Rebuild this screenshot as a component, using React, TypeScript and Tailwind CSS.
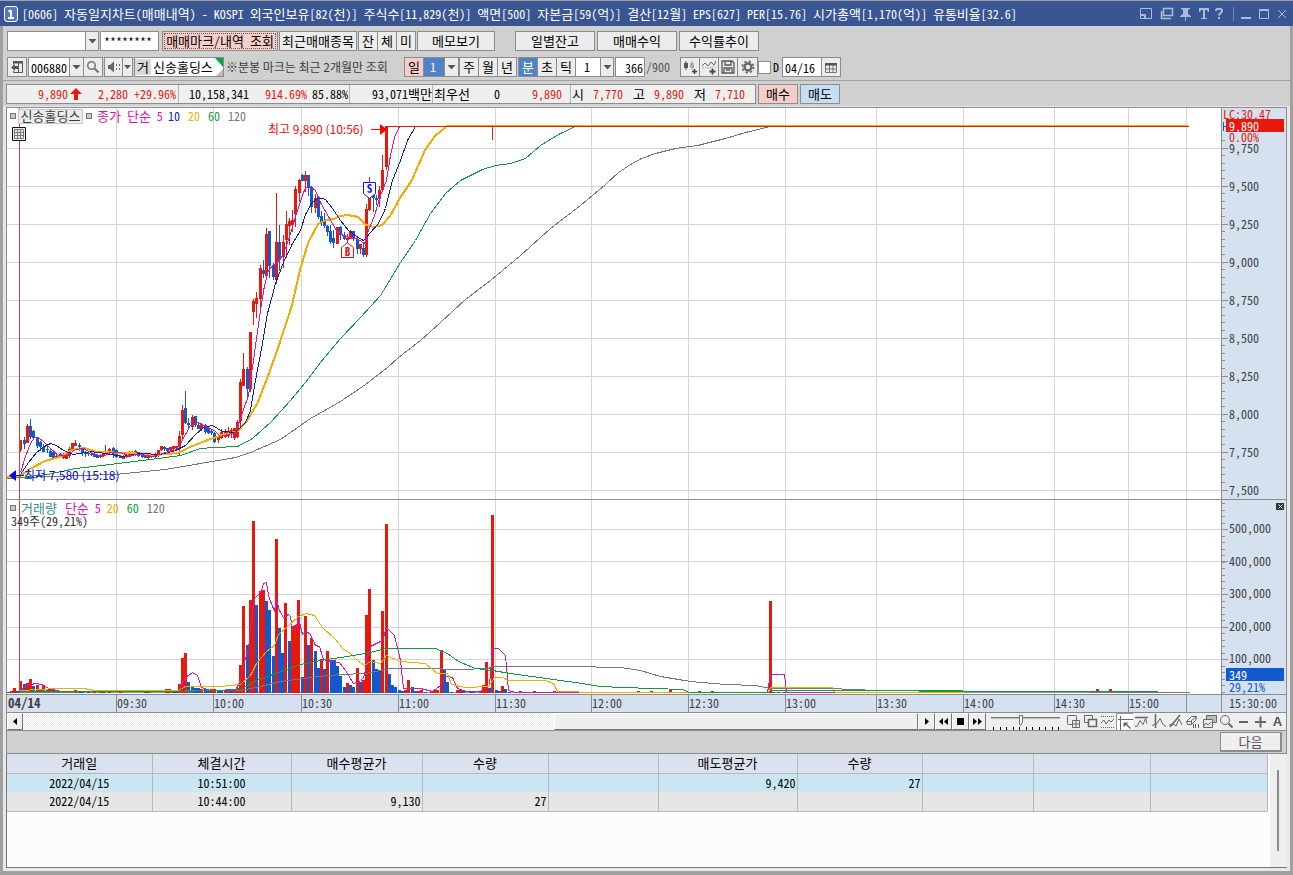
import React from "react";

const FONT =
  "[font-family:'Noto_Sans_Mono_CJK_KR','Noto_Sans_CJK_KR',monospace] text-[12px] leading-[16px]";
const PROPORTIONAL = "[font-family:'Noto_Sans_CJK_KR',sans-serif]";

/* ---------- data ---------- */

const PLOT_LEFT = 7;
const PLOT_WIDTH = 1214;
const pct = (x: number) => `${((x - PLOT_LEFT) / PLOT_WIDTH) * 100}%`;

const RED = "#e8190b";
const BLUE = "#1159cc";

// [x, direction, body top, body bottom, high, low]
type Candle = [number, "r" | "b", number, number, number, number];
const candles: Candle[] = [
  [8, "r", 477, 479, 477, 479], [11, "r", 477, 479, 476, 479], [20, "r", 440, 450, 440, 452], [24, "b", 440, 444, 437, 449],
  [27, "r", 426, 443, 424, 443], [30, "b", 426, 437, 419, 439], [33, "b", 431, 438, 430, 438],
  [37, "b", 437, 446, 437, 448], [40, "b", 442, 447, 441, 451], [43, "b", 447, 452, 444, 452],
  [47, "b", 449, 450, 446, 453], [50, "b", 451, 457, 449, 457], [53, "b", 452, 459, 450, 459],
  [56, "r", 456, 459, 454, 459], [60, "b", 454, 457, 453, 458], [63, "r", 455, 458, 453, 459],
  [66, "r", 455, 459, 454, 459], [69, "r", 449, 456, 447, 458], [72, "r", 443, 450, 443, 452],
  [75, "r", 443, 446, 440, 446], [79, "b", 445, 447, 443, 451], [82, "b", 449, 453, 448, 456],
  [85, "b", 453, 454, 451, 457], [88, "b", 453, 454, 451, 456], [91, "b", 454, 455, 452, 456],
  [94, "b", 454, 457, 453, 457], [97, "b", 455, 458, 454, 458], [100, "r", 455, 457, 454, 458],
  [103, "r", 454, 456, 453, 457], [105, "r", 451, 453, 445, 454], [109, "r", 449, 453, 448, 454],
  [113, "b", 448, 455, 447, 458], [116, "b", 450, 457, 449, 458], [120, "b", 456, 458, 455, 458],
  [123, "r", 457, 459, 455, 459], [126, "r", 455, 457, 454, 458], [129, "r", 452, 457, 451, 457],
  [132, "b", 452, 455, 451, 456], [135, "r", 451, 455, 450, 456], [138, "b", 452, 456, 452, 457],
  [142, "b", 455, 457, 453, 458], [145, "b", 456, 458, 455, 458], [148, "r", 456, 458, 455, 459],
  [151, "b", 455, 457, 455, 458], [155, "r", 454, 457, 453, 458], [158, "r", 450, 456, 450, 457],
  [161, "r", 446, 450, 446, 451], [164, "b", 447, 449, 446, 451], [167, "b", 448, 451, 448, 452],
  [170, "r", 447, 450, 447, 451], [173, "r", 446, 449, 446, 450], [176, "r", 446, 448, 446, 449],
  [179, "r", 436, 447, 431, 455], [182, "r", 410, 435, 405, 439], [185, "b", 408, 423, 391, 424],
  [188, "b", 423, 425, 418, 429], [192, "r", 417, 427, 415, 430], [195, "b", 416, 425, 416, 427],
  [198, "b", 425, 429, 422, 429], [201, "r", 425, 429, 423, 431], [205, "b", 425, 432, 424, 434],
  [208, "b", 428, 433, 426, 434], [211, "b", 431, 433, 429, 435], [214, "b", 433, 442, 432, 443],
  [218, "r", 437, 440, 436, 443], [221, "r", 432, 438, 429, 439], [225, "r", 431, 437, 429, 438],
  [228, "r", 431, 436, 427, 438], [231, "r", 430, 434, 428, 438], [234, "r", 428, 438, 428, 440],
  [237, "r", 422, 437, 420, 438], [240, "r", 382, 421, 379, 428], [243, "r", 369, 386, 353, 386],
  [247, "b", 369, 389, 367, 397], [250, "r", 332, 389, 332, 392], [253, "r", 301, 312, 299, 325],
  [256, "r", 298, 304, 292, 318], [260, "r", 268, 299, 265, 312], [263, "b", 270, 274, 260, 278],
  [266, "r", 234, 276, 228, 277], [269, "b", 231, 266, 231, 278], [273, "b", 265, 277, 263, 280],
  [276, "r", 242, 280, 193, 284], [279, "b", 242, 260, 225, 271], [283, "r", 242, 257, 235, 268],
  [286, "r", 224, 240, 211, 258], [289, "r", 221, 226, 218, 245], [292, "r", 220, 225, 210, 232],
  [295, "r", 189, 214, 186, 227], [299, "r", 180, 193, 179, 202], [302, "b", 175, 181, 174, 181],
  [305, "r", 175, 181, 171, 192], [308, "b", 175, 188, 175, 196], [311, "b", 187, 207, 186, 213],
  [315, "r", 198, 208, 194, 213], [318, "b", 197, 217, 196, 219], [321, "b", 216, 222, 211, 226],
  [324, "b", 220, 226, 213, 228], [327, "b", 226, 232, 225, 236], [330, "b", 231, 242, 225, 244],
  [333, "b", 238, 243, 230, 248], [337, "r", 227, 244, 227, 244], [340, "b", 227, 235, 226, 240],
  [344, "b", 235, 239, 232, 240], [347, "r", 238, 240, 234, 243], [350, "r", 231, 239, 230, 239],
  [353, "b", 231, 239, 231, 241], [357, "b", 239, 249, 237, 254], [360, "r", 244, 249, 244, 254],
  [363, "b", 248, 255, 243, 257], [366, "r", 209, 255, 204, 257], [369, "r", 197, 210, 177, 211],
  [373, "b", 195, 198, 194, 212], [376, "b", 198, 200, 195, 205], [379, "r", 190, 199, 186, 207],
  [382, "r", 170, 190, 155, 192], [386, "r", 126, 167, 126, 170],
];

const priceAverages = [
  { color: "#777777", width: 1, points: "7,478 20,477 115,474 165,469 200,463 235,457 250,452 280,439 310,418 340,401 365,384 387,367 398,357 420,340 440,322 465,299 490,280 520,255 550,228 580,205 605,184 618,172 630,164 641,158 655,153 675,148 697,145 725,138 745,132 770,126" },
  { color: "#129a43", width: 1, points: "20,477 47,474 75,468 110,464 150,459 180,455 200,448 214,447 237,446 252,438 270,422 290,400 305,382 320,362 340,338 360,317 380,295 400,262 415,240 430,213 445,193 460,180 482,169 495,165 510,163 525,158 540,145 560,133 575,126" },
  { color: "#f0ae00", width: 2, points: "7,477 20,476 30,469 45,461 60,457 72,450 84,448 98,452 130,453 155,455 178,453 190,447 205,441 222,435 238,431 247,421 258,402 268,376 278,348 292,305 300,270 308,243 318,224 326,220 334,219 340,216 348,215 358,217 366,225 374,227 382,225 390,216 400,198 412,180 425,150 435,136 446,127" },
  { color: "#0a24a8", width: 1, points: "20,474 28,462 36,452 44,446 50,443 56,445 63,450 73,454 90,451 105,453 122,456 140,453 160,454 175,450 185,445 195,434 203,427 212,425 222,431 235,432 245,422 250,410 255,380 262,343 267,313 275,283 283,262 292,243 300,230 305,214 311,203 318,197 325,199 332,208 340,220 348,230 356,236 363,240 370,232 378,223 385,208 392,180 400,160 407,140 415,126" },
  { color: "#d916b0", width: 1, points: "20,472 25,456 30,443 34,437 38,437 44,442 50,448 58,455 66,455 75,449 83,448 92,453 103,456 110,452 120,452 128,455 140,454 152,456 162,453 176,449 180,443 190,425 197,422 205,426 214,430 220,436 235,432 241,415 243,409 248,395 250,380 253,360 256,338 260,310 264,285 268,270 272,265 276,263 281,257 286,245 291,230 296,213 301,198 305,187 310,186 315,190 320,202 328,216 336,230 344,236 350,237 358,239 364,243 368,230 374,215 380,195 386,180 390,155 394,137 399,126" },
];

// [x, direction, top]
type Bar = [number, "r" | "b", number];
const volumes: Bar[] = [
  [8, "b", 692], [11, "r", 691], [14, "r", 688], [17, "b", 691], [20, "r", 681], [24, "b", 684], [27, "r", 683], [30, "r", 679],
  [33, "b", 686], [37, "r", 685], [40, "b", 690], [43, "r", 685], [47, "b", 689], [50, "r", 688],
  [53, "b", 689], [56, "b", 690], [60, "r", 691], [63, "b", 691], [66, "b", 691], [69, "r", 691],
  [72, "r", 691], [75, "r", 690], [79, "b", 691], [82, "b", 691], [88, "b", 691], [94, "r", 691],
  [100, "b", 691], [103, "r", 691], [109, "b", 691], [120, "r", 692], [145, "r", 691], [148, "b", 691],
  [166, "r", 689], [169, "r", 689], [173, "b", 691], [176, "b", 691], [179, "r", 684], [182, "r", 658],
  [185, "r", 653], [188, "b", 682], [192, "b", 687], [195, "b", 688], [198, "b", 688], [201, "r", 689],
  [205, "b", 689], [208, "b", 690], [211, "r", 689], [214, "r", 689], [218, "b", 690], [221, "b", 691],
  [225, "r", 691], [228, "b", 691], [231, "b", 690], [234, "r", 689], [237, "r", 688], [240, "r", 665],
  [243, "r", 606], [247, "b", 645], [250, "r", 600], [253, "r", 521], [256, "b", 605], [260, "r", 591],
  [263, "r", 590], [266, "b", 601], [269, "b", 610], [273, "b", 656], [276, "r", 539], [279, "b", 628],
  [282, "b", 653], [285, "r", 603], [289, "b", 641], [292, "r", 626], [295, "r", 625], [298, "r", 600],
  [302, "b", 677], [305, "r", 616], [308, "b", 645], [311, "r", 638], [315, "b", 651], [318, "b", 668],
  [321, "r", 659], [324, "b", 669], [327, "r", 651], [331, "b", 660], [334, "b", 660], [337, "b", 666],
  [340, "b", 676], [344, "b", 687], [347, "r", 683], [350, "b", 685], [353, "b", 687], [357, "r", 668],
  [360, "b", 682], [363, "r", 680], [366, "r", 615], [369, "r", 589], [373, "b", 660], [376, "b", 669],
  [379, "b", 671], [382, "r", 611], [386, "r", 524], [389, "b", 674], [392, "b", 685], [395, "b", 687],
  [399, "b", 690], [402, "b", 691], [405, "r", 690], [408, "r", 680], [412, "b", 687], [415, "b", 691],
  [418, "r", 691], [421, "r", 690], [425, "b", 692], [431, "r", 691], [434, "r", 690], [437, "r", 690],
  [441, "r", 650], [444, "b", 669], [447, "b", 682], [451, "b", 692], [457, "r", 690], [460, "r", 690],
  [463, "b", 691], [470, "b", 691], [473, "b", 691], [480, "r", 691], [483, "r", 685], [486, "r", 662],
  [489, "b", 688], [492, "r", 515], [496, "b", 690], [499, "b", 691], [502, "r", 686], [505, "b", 689],
  [509, "b", 692], [515, "r", 692], [520, "r", 691], [528, "b", 692], [534, "b", 691], [554, "r", 691],
  [570, "r", 691], [638, "r", 691], [651, "r", 691], [670, "r", 690], [699, "r", 691], [712, "r", 691],
  [770, "r", 601], [773, "b", 692], [778, "r", 692], [784, "b", 692], [1097, "r", 689], [1110, "r", 689],
];

const volumeAverages = [
  { color: "#777777", points: "20,692 240,690 260,686 280,681 310,677 340,674 365,673 390,668 425,668 460,669 488,668 492,666 570,666 620,667 640,670 660,676 690,681 725,684 755,685 770,688 830,688 876,690 1160,692 1189,692" },
  { color: "#d916b0", points: "20,690 27,685 35,683 42,684 48,688 60,691 178,691 185,677 192,672 197,675 201,687 210,690 235,690 240,680 243,665 248,648 251,620 254,598 258,594 261,590 263,583 266,582 268,595 272,606 274,610 276,599 279,610 283,617 288,614 290,616 292,629 295,630 298,618 302,634 306,631 310,634 315,645 319,646 323,659 331,661 339,662 345,670 353,683 360,681 364,675 366,660 370,646 382,640 386,627 394,635 400,660 403,688 420,688 432,691 440,685 446,676 452,677 457,688 466,691 480,691 489,685 492,648 498,648 505,655 508,690 515,692 767,692 770,674 784,674 786,692 835,692" },
  { color: "#f0ae00", points: "20,690 40,689 55,688 83,688 95,690 178,690 185,686 220,686 240,684 250,675 256,663 266,651 274,645 278,634 287,626 298,616 306,613 314,615 322,627 335,639 342,648 350,653 357,660 364,665 370,661 380,663 386,655 400,661 425,663 437,673 447,673 451,684 465,687 488,686 494,677 503,677 507,680 545,680 553,683 557,691 600,692 768,692 770,687 832,687 835,692 963,692" },
  { color: "#129a43", points: "20,691 180,691 240,689 256,680 275,673 300,664 320,660 340,657 365,653 386,648 435,648 447,653 458,661 475,668 492,670 510,673 560,680 575,682 600,686 622,687 683,689 688,692 768,692 770,690 876,690 960,691 1157,691" },
];

const gridX = [116, 213, 301, 398, 495, 591, 688, 785, 876, 963, 1054, 1128, 1186];
const priceGrid = [148, 186, 224, 262, 300, 338, 376, 414, 452, 490];
const volumeGrid = [529, 561, 594, 627, 659];
const priceLabels = ["9,750", "9,500", "9,250", "9,000", "8,750", "8,500", "8,250", "8,000", "7,750", "7,500"];
const volumeLabels = ["500,000", "400,000", "300,000", "200,000", "100,000"];
const timeLabels: [number, string][] = [
  [109, "04/14"], [97, "09:30"], [88, "10:00"], [97, "10:30"], [97, "11:00"], [96, "11:30"], [97, "12:00"],
  [97, "12:30"], [91, "13:00"], [87, "13:30"], [91, "14:00"], [74, "14:30"], [58, "15:00"], [35, ""],
];
const timeColumns = timeLabels.map(([w]) => `minmax(0,${w}fr)`).join(" ");

/* ---------- controls ---------- */

function Ko({ children }: { children: string }) {
  return (
    <span className="whitespace-pre">
      {children.split(/([가-힣]+)/).map((part, i) =>
        i % 2 ? <span key={i} className="text-[13px]">{part}</span> : part,
      )}
    </span>
  );
}

const edge = "border border-[#8c8c8c]";
const btnBase =
  "h-5 shrink-0 flex items-center justify-center whitespace-nowrap bg-[#ececec] border border-[#8c8c8c]";

function Btn({ className = "", children, label }: { className?: string; children: React.ReactNode; label?: string }) {
  return (
    <button type="button" aria-label={label} className={`${btnBase} ${className}`}>
      {typeof children === "string" ? <Ko>{children}</Ko> : children}
    </button>
  );
}

function Down() {
  return (
    <svg width="9" height="5" viewBox="0 0 9 5" aria-hidden="true">
      <path d="M.5 0h8L4.500 4.500z" fill="#555" />
    </svg>
  );
}

function Picker({ label, value, className, textClass = "bg-white" }: { label: string; value: string; className: string; textClass?: string }) {
  return (
    <div className={`relative h-5 shrink-0 ${className}`}>
      <select aria-label={label} className={`h-full w-full appearance-none pl-2 pr-4 outline-none ${edge} ${textClass}`}>
        <option>{value}</option>
      </select>
      <span className="pointer-events-none absolute inset-y-px right-px flex w-[13px] items-center justify-center border-l border-[#8c8c8c] bg-[#ececec]">
        <Down />
      </span>
    </div>
  );
}

function TitleBar() {
  return (
    <header className="mt-px flex h-[25px] items-center bg-[#3a5692] pr-[6px] pl-1 text-white">
      <svg width="14" height="16" viewBox="0 0 14 16" aria-hidden="true">
        <rect x=".5" y=".5" width="13" height="15" rx="2.500" fill="#5779bb" stroke="#fff" />
        <path d="M7 4v8M4 12h6M4.500 5.500L7 4.500" stroke="#fff" strokeWidth="2" fill="none" />
      </svg>
      <h1 className="ml-1 min-w-0 flex-1">
        <Ko>{"[0606] 자동일지차트(매매내역) - KOSPI 외국인보유[82(천)] 주식수[11,829(천)] 액면[500] 자본금[59(억)] 결산[12월] EPS[627] PER[15.76] 시가총액[1,170(억)] 유통비율[32.6]"}</Ko>
      </h1>
      <svg width="148" height="16" viewBox="0 0 148 16" fill="none" stroke="#aebbd8" aria-hidden="true">
        <path d="M1.500 2.500h11v10h-11zM1.500 8.500h5v4M1.500 9.500h4v3" />
        <path d="M24.500 2.500h9v7h-9zM22.500 5v7.500H32" strokeWidth="1.500" />
        <path d="M42 2h9v1l-2 1v4l3 2v1H41v-1l3-2V4l-2-1zM46 11h1v4h-1z" fill="#aebbd8" stroke="none" />
        <path d="M60 2h10v4h-1l-1-2h-2v8h2v1h-6v-1h2V4h-2l-1 2h-1z" fill="#aebbd8" stroke="none" />
        <path d="M77 5c0-3 6-3 6 0 0 2-3 2-3 4.500M80 11v2" strokeWidth="2" />
        <path d="M94.500 1v14" stroke="#6f84b0" />
        <path d="M102 12h10" strokeWidth="2" />
        <path d="M120.500 4.500h9v8h-9zM120 3.500h10" />
        <path d="M120 3h10v2h-10z" fill="#aebbd8" stroke="none" />
        <path d="M139 4l8 8M147 4l-8 8" />
      </svg>
    </header>
  );
}

function ActionRow() {
  return (
    <div className="flex">
      <Picker label="계좌" value="" className="w-[92px]" />
      <input aria-label="비밀번호" defaultValue="********" className={`ml-px h-5 w-[59px] shrink-0 bg-white px-[3px] ${edge}`} />
      <button type="button" className="ml-[3px] h-5 w-[116px] shrink-0 border border-[#8c8c8c] bg-[#f6cec9] p-px">
        <span className="flex h-full items-center justify-center border border-dotted border-[#705050]"><Ko>매매마크/내역 조회</Ko></span>
      </button>
      <Btn className="ml-px w-[78px]">최근매매종목</Btn>
      <div className="ml-px flex">
        <Btn className="w-5">잔</Btn>
        <Btn className="-ml-px w-5">체</Btn>
        <Btn className="-ml-px w-5">미</Btn>
      </div>
      <Btn className="ml-px w-[78px]">메모보기</Btn>
      <Btn className="ml-5 w-20">일별잔고</Btn>
      <Btn className="ml-[2px] w-20">매매수익</Btn>
      <Btn className="ml-[2px] w-20">수익률추이</Btn>
    </div>
  );
}

function SymbolRow() {
  return (
    <div className="mt-[6px] flex">
      <Btn className="w-5" label="패널 접기">
        <svg width="14" height="14" viewBox="0 0 14 14">
          <path d="M3.500 4.500V1.500h9v11h-9V11" fill="none" stroke="#555" />
          <path d="M3 1h10v2.500H3zM8 3h1v10H8zM1 7.500L5 4v2h3v3H5v2z" fill="#555" />
        </svg>
      </Btn>
      <div className="ml-px flex">
        <input aria-label="종목코드" defaultValue="006880" className={`h-5 w-[42px] bg-white px-[2px] ${edge}`} />
        <Btn className="-ml-px w-[15px]" label="종목 목록"><Down /></Btn>
        <Btn className="-ml-px w-5" label="종목 검색">
          <svg width="14" height="14" viewBox="0 0 14 14" fill="none" stroke="#777">
            <circle cx="5.500" cy="5.500" r="3.800" strokeWidth="1.500" />
            <path d="M8.500 8.500L12.500 12.500" strokeWidth="2.200" />
          </svg>
        </Btn>
      </div>
      <div className="ml-px flex">
        <Btn className="w-[19px]" label="소리">
          <svg width="14" height="12" viewBox="0 0 14 12" fill="#666">
            <path d="M1 4h2l4-3.500v11L3 8H1z" />
            <path d="M9 3h1v2H9zM9 7h1v2H9zM12 3h1v2h-1zM12 7h1v2h-1z" />
          </svg>
        </Btn>
        <Btn className="-ml-px w-[11px]" label="소리 설정">
          <svg width="7" height="4" viewBox="0 0 7 4"><path d="M0 0h7L3.500 4z" fill="#555" /></svg>
        </Btn>
      </div>
      <div className={`relative ml-px flex h-5 w-[90px] items-center bg-white ${edge}`}>
        <span className="flex h-4 w-4 items-center justify-center bg-[#d8d8d8]"><Ko>거</Ko></span>
        <span className="ml-[2px]"><Ko>신송홀딩스</Ko></span>
        <svg className="absolute top-0 right-0" width="8" height="18" viewBox="0 0 8 18" aria-hidden="true">
          <path d="M0 0h8v9z" fill="#12a24b" />
          <path d="M8 11v7H1z" fill="#bbb" />
        </svg>
      </div>
      <p className={`ml-[2px] flex h-5 w-[178px] items-center whitespace-nowrap text-[#3c3c3c] ${PROPORTIONAL}`}>※분봉 마크는 최근 2개월만 조회</p>
      <div className="flex">
        <Btn className="w-5 bg-[#f6cec9]!">일</Btn>
        <div className="relative -ml-px h-5 w-9">
          <select aria-label="일 주기" className={`h-full w-full appearance-none bg-[#4f83c9] pl-[6px] text-white outline-none ${edge}`}>
            <option>1</option>
          </select>
          <span className="pointer-events-none absolute inset-y-px right-px flex w-[14px] items-center justify-center border-l border-[#8c8c8c] bg-[#ececec]"><Down /></span>
        </div>
      </div>
      <div className="flex">
        <Btn className="w-5">주</Btn>
        <Btn className="-ml-px w-5">월</Btn>
        <Btn className="-ml-px w-5">년</Btn>
      </div>
      <div className="ml-px flex">
        <Btn className="w-5 bg-[#4f83c9]! text-white">분</Btn>
        <Btn className="-ml-px w-5">초</Btn>
        <Btn className="-ml-px w-5">틱</Btn>
        <Picker label="분 주기" value="1" className="-ml-px w-[39px]" />
      </div>
      <input aria-label="표시 봉 수" defaultValue="366" className={`ml-px h-5 w-[30px] bg-white pr-px text-right ${edge}`} />
      <span className="ml-px flex h-5 w-[34px] items-center text-[#555]">/900</span>
      <div className="flex">
        <Btn className="w-5" label="봉 추가">
          <svg width="16" height="16" viewBox="0 0 16 16">
            <path d="M2 4h4v5H2zM3.500 2h1v9h-1z" fill="#555" />
            <path d="M8 4h4v5H8zM9.500 2h1v9h-1z" fill="#aaa" />
            <path d="M10 12.500h5M12.500 10v5" stroke="#444" strokeWidth="1.600" />
          </svg>
        </Btn>
        <Btn className="-ml-px w-5" label="지표 추가">
          <svg width="16" height="16" viewBox="0 0 16 16" fill="none">
            <path d="M1 7l3-3 3 3 3-4 3 3 2-4" stroke="#666" />
            <path d="M1 9l4-1 3 2 4-3 3 2" stroke="#aaa" strokeDasharray="2 1" />
            <path d="M8.500 12.500h6M11.500 9.500v6" stroke="#444" strokeWidth="1.800" />
          </svg>
        </Btn>
        <Btn className="-ml-px w-5" label="저장">
          <svg width="14" height="14" viewBox="0 0 14 14" fill="none" stroke="#555" strokeWidth="1.300">
            <path d="M1 1h10l2 2v10H1zM4 1v4h6V1M3 13V8h8v5M5 10h4" />
          </svg>
        </Btn>
        <Btn className="-ml-px w-[21px]" label="설정">
          <svg width="14" height="14" viewBox="0 0 14 14" fill="none" stroke="#666">
            <circle cx="7" cy="7" r="3.500" strokeWidth="2.400" />
            <circle cx="7" cy="7" r="5.600" strokeWidth="1.800" strokeDasharray="2.200 2.200" />
          </svg>
        </Btn>
      </div>
      <label className="flex h-5 items-center">
        <input type="checkbox" className="h-[13px] w-[13px] appearance-none border border-[#8c8c8c] bg-white" />
        <span className="ml-[2px]">D</span>
      </label>
      <div className="ml-[3px] flex">
        <input aria-label="날짜" defaultValue="04/16" className={`h-5 w-10 bg-white px-[2px] ${edge}`} />
        <Btn className="-ml-px w-5" label="달력">
          <svg width="12" height="11" viewBox="0 0 12 11" fill="none" stroke="#777">
            <path d="M.5 1.500h11v9H.5zM.5 7h11M4.500 3v7M8 3v7" />
            <path d="M0 1h12v2.500H0z" fill="#555" stroke="none" />
          </svg>
        </Btn>
      </div>
    </div>
  );
}

function QuoteRow() {
  return (
    <div className="flex px-[3px]">
      <div className="flex h-5 w-[750px] shrink-0 items-center border border-[#8c8c8c] bg-[#f0efef] whitespace-nowrap">
        <div className="flex h-full w-[172px] items-center justify-end border-r border-[#b4b4b4] text-[#e01a10]">
          <span>9,890</span>
          <svg className="mr-[16px] ml-[2px]" width="12" height="12" viewBox="0 0 12 12" aria-hidden="true">
            <path d="M6 0l6 6H8v6H4V6H0z" fill={RED} />
          </svg>
          <span className="mr-[6px]">2,280</span>
          <span className="mr-[2px]">+29.96%</span>
        </div>
        <div className="flex h-full w-[171px] items-center justify-end border-r border-[#b4b4b4]">
          <span className="mr-[16px]">10,158,341</span>
          <span className="mr-[5px] text-[#e01a10]">914.69%</span>
          <span className="mr-px">85.88%</span>
        </div>
        <div className="flex h-full w-[83px] items-center justify-end border-r border-[#b4b4b4]"><Ko>93,071백만</Ko></div>
        <div className="flex h-full w-[138px] items-center border-r border-[#b4b4b4] pl-px">
          <Ko>최우선</Ko>
          <span className="ml-[24px]">0</span>
          <span className="mr-[8px] ml-auto text-[#e01a10]">9,890</span>
        </div>
        <dl className="flex items-center pl-px">
          <dt><Ko>시</Ko></dt><dd className="ml-[9px] text-[#e01a10]">7,770</dd>
          <dt className="ml-[10px]"><Ko>고</Ko></dt><dd className="ml-[9px] text-[#e01a10]">9,890</dd>
          <dt className="ml-[10px]"><Ko>저</Ko></dt><dd className="ml-[9px] text-[#e01a10]">7,710</dd>
        </dl>
      </div>
      <Btn className="ml-[2px] w-10 bg-[#f6cec9]!">매수</Btn>
      <Btn className="ml-[2px] w-10 bg-[#c6ddf4]!">매도</Btn>
    </div>
  );
}

/* ---------- chart ---------- */

function Grid({ top, bottom, rows }: { top: number; bottom: number; rows: number[] }) {
  return (
    <g stroke="#d5d5d5">
      {gridX.map((x) => <line key={x} x1={x + 0.5} x2={x + 0.5} y1={top} y2={bottom} />)}
      {rows.map((y) => <line key={y} x1={7} x2={1220} y1={y + 0.5} y2={y + 0.5} />)}
    </g>
  );
}

function Handle() {
  return <span className="inline-block h-[6px] w-[6px] border border-[#777] bg-[#c8c8c8]" />;
}

function PricePane() {
  return (
    <div className="relative h-[391px] flex-1 bg-white">
      <svg className="block h-full w-full" viewBox="7 108 1214 391" preserveAspectRatio="none" shapeRendering="crispEdges" role="img" aria-label="가격 차트">
        <Grid top={108} bottom={499} rows={priceGrid} />
        {candles.map(([x, d, top, bottom, high, low]) => (
          <g key={x} fill={d === "r" ? RED : BLUE}>
            <rect x={x} y={high} width={1} height={low - high} />
            <rect x={x - 1} y={top} width={3} height={bottom - top} />
          </g>
        ))}
        {priceAverages.map((m) => (
          <polyline key={m.color} points={m.points} fill="none" stroke={m.color} strokeWidth={m.width} transform={m.width === 1 ? "translate(.5 .5)" : undefined} />
        ))}
        <path d="M446 125.500H1188" stroke="#f0ae00" />
        <path d="M385 126.500H1189M492.500 127V140" stroke={RED} />
        <path d="M19.500 108V499" stroke="#d24040" />
      </svg>
      <div className="absolute top-0 left-[3px] flex h-4 items-center">
        <Handle />
        <span className="ml-[2px] flex h-[15px] w-[65px] items-center justify-center border border-[#c6c6c6] bg-[#ececec] text-[#3c3c3c]"><Ko>신송홀딩스</Ko></span>
        <span className="ml-[3px] flex"><Handle /></span>
        <span className="ml-[5px] text-[#d916b0]"><Ko>종가 단순 5</Ko></span>
        <span className="ml-[5px] text-[#0a24a8]">10</span>
        <span className="ml-[8px] text-[#f0ae00]">20</span>
        <span className="ml-[8px] text-[#129a43]">60</span>
        <span className="ml-[8px] text-[#777]">120</span>
      </div>
      <svg className="absolute top-[19px] left-[5px]" width="14" height="14" viewBox="0 0 14 14" fill="none" aria-hidden="true">
        <path d="M.5.5h13v13H.5z" fill="#eee" stroke="#111" />
        <path d="M2.500 2.500h9v9h-9zM2.500 5.500h9M2.500 8.500h9M5.500 2.500v9M8.500 2.500v9" stroke="#777" />
      </svg>
      <div className="absolute top-[13px] flex items-center whitespace-nowrap text-[#f00a0a]" style={{ left: pct(268) }}>
        <span className={`w-[103px] ${PROPORTIONAL}`}>최고 9,890 (10:56)</span>
        <svg width="16" height="12" viewBox="0 0 16 12" aria-hidden="true"><path d="M0 6.500h10" stroke="#f00" /><path d="M9 1l7 5.500-7 5.500z" fill="#f00" /></svg>
      </div>
      <div className="absolute top-[359px] flex items-center whitespace-nowrap text-[#0808e0]" style={{ left: pct(9) }}>
        <svg width="15" height="12" viewBox="0 0 15 12" aria-hidden="true"><path d="M6 6.500h9" stroke="#0808e0" /><path d="M7 1L0 6.500l7 5.500z" fill="#0808e0" /></svg>
        <span className={PROPORTIONAL}>최저 7,580 (15:18)</span>
      </div>
      <svg className="absolute top-[74px]" style={{ left: pct(363) }} width="13" height="17" viewBox="0 0 13 17">
        <path d="M.5.500h12v11L6.500 16.500.5 11.500z" fill="#fff" stroke="#1212f0" />
        <text x="6.500" y="11" textAnchor="middle" fontSize="11" fontWeight="700" fill="#1212f0">S</text>
      </svg>
      <svg className="absolute top-[134px]" style={{ left: pct(341) }} width="13" height="17" viewBox="0 0 13 17">
        <path d="M6.500.700l6 4.800v10H.5v-10z" fill="#fff" stroke="#e01010" />
        <text x="6.500" y="14" textAnchor="middle" fontSize="11" fontWeight="700" fill="#e01010">B</text>
      </svg>
    </div>
  );
}

function PriceAxis() {
  const minor = Array.from({ length: 47 }, (_, i) => 140 + Math.round(i * 7.6));
  return (
    <div className="relative h-[391px] w-[65px] shrink-0 overflow-hidden border-l border-[#8c8c8c] bg-[#d6e1ef] text-[#3f3f3f]">
      <svg className="absolute top-0 left-0" width="8" height="391" viewBox="0 108 8 391" stroke="#8c8c8c" aria-hidden="true">
        {minor.map((y) => <path key={y} d={`M0 ${y + 0.5}H3`} />)}
        {priceGrid.map((y) => <path key={y} d={`M0 ${y + 0.5}H6`} />)}
        <path d="M1.500 122v9M1 126.500h3" stroke={BLUE} />
      </svg>
      <span className="absolute top-0 left-px leading-[12px] text-[#e01a10]">LC:30.47</span>
      <span className="absolute top-[23px] left-[7px] leading-[12px] text-[#e01a10]">0.00%</span>
      <ul className="mt-[34px] ml-[7px] leading-[12px]">
        {priceLabels.map((p) => <li key={p} className="h-[38px]">{p}</li>)}
      </ul>
      <span className="absolute top-[11px] right-[2px] left-[4px] h-[13px] bg-[#e8190b] pl-[3px] leading-[13px] text-white">9,890</span>
    </div>
  );
}

function VolumePane() {
  return (
    <div className="relative h-[194px] flex-1 bg-white">
      <svg className="block h-full w-full" viewBox="7 500 1214 194" preserveAspectRatio="none" shapeRendering="crispEdges" role="img" aria-label="거래량 차트">
        <Grid top={500} bottom={694} rows={volumeGrid} />
        <path d="M7 692.500H1189" stroke="#999" />
        {volumes.map(([x, d, top]) => (
          <rect key={x} x={x - 1} y={top} width={3} height={693 - top} fill={d === "r" ? RED : BLUE} />
        ))}
        {volumeAverages.map((m) => (
          <polyline key={m.color} points={m.points} fill="none" stroke={m.color} transform="translate(.5 .5)" />
        ))}
        <path d="M830 690.500H963M963 691.500H1157" stroke="#129a43" />
        <path d="M19.500 500V692" stroke="#d24040" />
      </svg>
      <div className="absolute top-0 left-[3px] flex h-4 items-center">
        <Handle />
        <span className="ml-[5px] text-[#2f8f8f]"><Ko>거래량</Ko></span>
        <span className="ml-[8px] text-[#d916b0]"><Ko>단순 5</Ko></span>
        <span className="ml-[6px] text-[#f0ae00]">20</span>
        <span className="ml-[8px] text-[#129a43]">60</span>
        <span className="ml-[8px] text-[#777]">120</span>
      </div>
      <span className="absolute top-[13px] left-[4px] text-[#333]">349주(29,21%)</span>
    </div>
  );
}

function VolumeAxis() {
  const minor = Array.from({ length: 30 }, (_, i) => 503 + Math.round(i * 6.5));
  return (
    <div className="relative h-[194px] w-[65px] shrink-0 border-l border-[#8c8c8c] bg-[#d6e1ef] text-[#3f3f3f]">
      <svg className="absolute top-0 left-0" width="8" height="194" viewBox="0 500 8 194" stroke="#8c8c8c" aria-hidden="true">
        {minor.map((y) => <path key={y} d={`M0 ${y + 0.5}H3`} />)}
        {volumeGrid.map((y) => <path key={y} d={`M0 ${y + 0.5}H6`} />)}
      </svg>
      <button type="button" aria-label="지표 닫기" className="absolute top-[3px] right-[2px] flex h-[7px] w-[8px] items-center justify-center bg-[#333]">
        <svg width="5" height="5" viewBox="0 0 5 5" stroke="#fff"><path d="M.5.5l4 4M4.500.5l-4 4" /></svg>
      </button>
      <ul className="mt-[20px] ml-[7px] flex h-[146px] flex-col justify-between">
        {volumeLabels.map((v) => <li key={v}>{v}</li>)}
      </ul>
      <div className="absolute top-[168px] right-[2px] left-[4px] h-[13px] bg-[#1159cc] pl-[3px] leading-[13px] text-white">349</div>
      <div className="absolute top-[181px] left-[7px] leading-[12px] text-[#1159cc]">29,21%</div>
    </div>
  );
}

function TimeAxis() {
  return (
    <div className="flex h-[18px] border-t border-[#8c8c8c] bg-[#d6e1ef] text-[#3f3f3f]">
      <div className="grid flex-1" style={{ gridTemplateColumns: timeColumns }}>
        {timeLabels.map(([, t], i) => (
          <div key={t} className={`whitespace-nowrap ${i === 0 ? "pl-px text-[13px] font-bold" : "border-l border-[#8c8c8c]"}`}>
            {t}
          </div>
        ))}
      </div>
      <div className="w-[65px] shrink-0 border-l border-[#8c8c8c] pl-[7px]">15:30:00</div>
    </div>
  );
}

const raised = "h-[17px] shrink-0 flex items-center justify-center bg-[#efefef] border border-t-white border-l-white border-r-[#777] border-b-[#777]";

const toolIcons: { label: string; art: React.ReactNode }[] = [
  { label: "차트 분할", art: <><rect x="1.500" y="1.500" width="9" height="9" rx="1" /><path d="M6.500 6.500h7v7h-7zM6.500 10h7M10 6.500v7" fill="#eee" /></> },
  { label: "차트 겹치기", art: <><path d="M1.500 1.500h8v7h-8z" /><path d="M5.500 5.500h8v7h-8z" fill="#eee" strokeWidth="1.600" /></> },
  { label: "지표 범위", art: <><path d="M1 2.500h13M1 13.500h13" strokeDasharray="1 1" /><path d="M1 9l3-3 2 4 3-4 2 2 3-3" /></> },
  { label: "십자선", art: <><path d="M2.500 1v14M0 4.500h15" /><path d="M5.500 7.500h5l-1.500 1.500L13 13l-1 1-4-4-2.500 2.500z" fill="#666" stroke="none" /></> },
  { label: "수평선", art: <><path d="M1 3.500h13" strokeWidth="1.500" /><path d="M1 12.500h2l3-6 3 4 2.500-6 1.500 5" /></> },
  { label: "수직선", art: <><path d="M4.500 0v14" strokeWidth="1.500" /><path d="M1 11.500l5-2 3-5 3 6 3 2" /></> },
  { label: "추세선", art: <><path d="M2 13L12 1" strokeWidth="1.500" /><path d="M1 11l4-1 3 2 3-7 3 6" /></> },
  { label: "지우개", art: <><path d="M1.500 7.500l5-5h5l-1 4-4 4h-4zM6.500 10.500v-4l5-4M1.500 7.500h5" /><path d="M8.500 10v4M10.500 10v4M13.500 10v4" /></> },
  { label: "지표 목록", art: <><path d="M4.500 1.500h10v7h-10z" fill="#bbb" /><path d="M1.500 5.500h9v8h-9z" fill="#eee" /><path d="M2 12l2-3 2 2 3-3" /></> },
  { label: "돋보기", art: <><circle cx="6" cy="6" r="4.500" /><path d="M9.500 9.500l4 4" strokeWidth="2" /></> },
  { label: "축소", art: <path d="M3 8h9" strokeWidth="2" /> },
  { label: "확대", art: <path d="M2 8h11M7.500 2.500v11" strokeWidth="2" /> },
];

function ChartToolbar() {
  return (
    <div className="flex h-[19px] items-start border-y border-[#8c8c8c] bg-[#efefef]">
      <button type="button" aria-label="왼쪽으로" className={`${raised} w-4`}>
        <svg width="4" height="7" viewBox="0 0 4 7"><path d="M4 0v7L0 3.500z" /></svg>
      </button>
      <div className="flex h-[17px] flex-1 bg-[repeating-conic-gradient(#ececec_0_25%,#ffffff_0_50%)] bg-[length:2px_2px] pl-[531px]">
        <div className="flex-1 border border-t-white border-r-[#777] border-b-[#777] border-l-white bg-[#efefef]" />
      </div>
      <button type="button" aria-label="재생" className={`${raised} w-[17px]`}><svg width="4" height="7" viewBox="0 0 4 7"><path d="M0 0v7l4-3.500z" /></svg></button>
      <button type="button" aria-label="뒤로" className={`${raised} w-[17px]`}><svg width="9" height="7" viewBox="0 0 9 7"><path d="M4 0v7L0 3.500zM9 0v7L5 3.500z" /></svg></button>
      <button type="button" aria-label="정지" className={`${raised} w-[17px]`}><svg width="7" height="7" viewBox="0 0 7 7"><path d="M0 0h7v7H0z" /></svg></button>
      <button type="button" aria-label="앞으로" className={`${raised} w-[17px]`}><svg width="9" height="7" viewBox="0 0 9 7"><path d="M0 0v7l4-3.500zM5 0v7l4-3.500z" /></svg></button>
      <div className="relative ml-[4px] h-[17px] w-[72px] shrink-0">
        <svg width="72" height="17" viewBox="0 0 72 17" shapeRendering="crispEdges" aria-hidden="true">
          <path d="M1 4.500h69" stroke="#777" /><path d="M1 5.500h69" stroke="#bbb" />
          <path d="M3.500 14v3M10.500 14v3M16.500 14v3M23.500 14v3M29.500 14v3M36.500 14v3M42.500 14v3M49.500 14v3M55.500 14v3M62.500 14v3M68.500 14v3" stroke="#000" />
          <path d="M29 2h3v8l-1 2h-1l-1-2z" fill="#f4f4f4" stroke="#777" />
        </svg>
        <input type="range" aria-label="재생 속도" className="absolute inset-0 h-full w-full opacity-0" />
      </div>
      <div className="ml-[3px] flex w-[221px] shrink-0">
        {toolIcons.map((t, i) => (
          <button key={t.label} type="button" aria-label={t.label} className={`flex h-[17px] w-[17px] items-center justify-center ${i === 3 ? "border-t border-l border-[#999] bg-white" : ""}`}>
            <svg width="15" height="15" viewBox="0 0 15 15" fill="none" stroke="#666">{t.art}</svg>
          </button>
        ))}
        <button type="button" className="h-[17px] w-[17px] text-center font-['Liberation_Sans'] text-[13px] font-bold text-[#555]">A</button>
      </div>
    </div>
  );
}

/* ---------- trade table ---------- */

const colWidths = ["w-[145px]", "w-[139px]", "w-[131px]", "w-[126px]", "w-[110px]", "w-[139px]", "w-[125px]", "w-[111px]", "w-[117px]", "w-[117px]"];
const headings = ["거래일", "체결시간", "매수평균가", "수량", "", "매도평균가", "수량", "", "", ""];
const trades = [
  ["2022/04/15", "10:51:00", "", "", "", "9,420", "27", "", "", ""],
  ["2022/04/15", "10:44:00", "9,130", "27", "", "", "", "", "", ""],
];

function Trades() {
  return (
    <section className="flex flex-1 border border-[#777] border-t-[#8c8c8c] bg-[#fbfcfe]">
      <div className="flex-1">
        <table className="w-full table-fixed border-collapse">
          <colgroup>{colWidths.map((w, i) => <col key={i} className={w} />)}</colgroup>
          <thead>
            <tr className="h-[19px] bg-[#dbe2ed]">
              {headings.map((h, i) => <th key={i} className="border-r border-b border-[#b8b8b8] p-0 font-normal"><Ko>{h}</Ko></th>)}
            </tr>
          </thead>
          <tbody>
            {trades.map((row, r) => (
              <tr key={r} className={r === 0 ? "h-[19px] bg-[#c9e6f2]" : "h-[19px] border-b border-[#b8b8b8] bg-[#e6e6e6]"}>
                {row.map((v, i) => (
                  <td key={i} className={`border-r border-[#b8b8b8] p-0 ${i < 2 ? "text-center" : "pr-px text-right"}`}>{v}</td>
                ))}
              </tr>
            ))}
          </tbody>
        </table>
      </div>
      <div className="ml-[2px] flex w-[17px] shrink-0 justify-center bg-[#efefef] py-4">
        <div className="w-[2px] bg-[#8c8c8c]" />
      </div>
    </section>
  );
}

export default function App() {
  return (
    <div className={`flex min-h-screen flex-col bg-[#a0a0a0] text-black ${FONT}`}>
      <TitleBar />
      <main className="mx-[3px] mb-1 flex flex-1 flex-col bg-[#d0d0d0]">
        <div className="border-b border-[#a0a0a0] px-1 pt-[5px] pb-[3px]">
          <ActionRow />
          <SymbolRow />
        </div>
        <div className="pt-[3px] pb-[2px]">
          <QuoteRow />
        </div>
        <div className="flex flex-1 flex-col border-[3px] border-t border-[#e8e8e8]">
          <div className="border-x border-t border-[#8c8c8c]">
            <div className="flex"><PricePane /><PriceAxis /></div>
            <div className="flex border-t border-[#8c8c8c]"><VolumePane /><VolumeAxis /></div>
            <TimeAxis />
            <ChartToolbar />
            <div className="flex h-[22px] items-center justify-end bg-[#d0d0d0] pr-[4px]">
              <button type="button" className="flex h-5 w-[62px] items-center justify-center border border-r-2 border-b-2 border-[#8c8c8c] bg-[#efefef] text-[#555]"><Ko>다음</Ko></button>
            </div>
          </div>
          <Trades />
        </div>
      </main>
    </div>
  );
}
